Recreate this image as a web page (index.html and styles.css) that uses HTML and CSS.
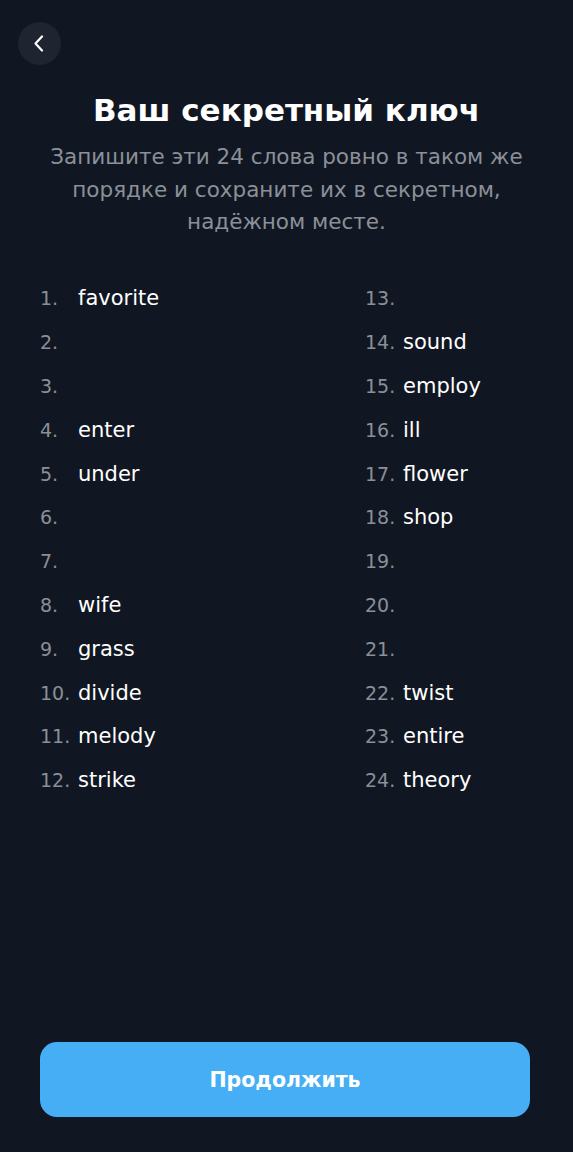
FILE: index.html
```html
<!DOCTYPE html>
<html lang="ru">
<head>
<meta charset="utf-8">
<link rel="stylesheet" href="styles.css">
</head>
<body>
<div class="screen">
  <header class="topbar">
    <button class="back" aria-label="Назад">
      <svg width="12" height="17" viewBox="0 0 12 17"><path d="M9 1.5 L2.5 8.5 L9 15.5" fill="none" stroke="#fff" stroke-width="2.2" stroke-linecap="round" stroke-linejoin="round"/></svg>
    </button>
  </header>
  <h1 class="title">Ваш секретный ключ</h1>
  <p class="subtitle">Запишите эти 24 слова ровно в таком же порядке и сохраните их в секретном, надёжном месте.</p>
  <div class="words">
    <ol class="col">
      <li><span class="n">1.</span><span class="w">favorite</span></li>
      <li><span class="n">2.</span><span class="w"></span></li>
      <li><span class="n">3.</span><span class="w"></span></li>
      <li><span class="n">4.</span><span class="w">enter</span></li>
      <li><span class="n">5.</span><span class="w">under</span></li>
      <li><span class="n">6.</span><span class="w"></span></li>
      <li><span class="n">7.</span><span class="w"></span></li>
      <li><span class="n">8.</span><span class="w">wife</span></li>
      <li><span class="n">9.</span><span class="w">grass</span></li>
      <li><span class="n">10.</span><span class="w">divide</span></li>
      <li><span class="n">11.</span><span class="w">melody</span></li>
      <li><span class="n">12.</span><span class="w">strike</span></li>
    </ol>
    <ol class="col">
      <li><span class="n">13.</span><span class="w"></span></li>
      <li><span class="n">14.</span><span class="w">sound</span></li>
      <li><span class="n">15.</span><span class="w">employ</span></li>
      <li><span class="n">16.</span><span class="w">ill</span></li>
      <li><span class="n">17.</span><span class="w">flower</span></li>
      <li><span class="n">18.</span><span class="w">shop</span></li>
      <li><span class="n">19.</span><span class="w"></span></li>
      <li><span class="n">20.</span><span class="w"></span></li>
      <li><span class="n">21.</span><span class="w"></span></li>
      <li><span class="n">22.</span><span class="w">twist</span></li>
      <li><span class="n">23.</span><span class="w">entire</span></li>
      <li><span class="n">24.</span><span class="w">theory</span></li>
    </ol>
  </div>
  <button class="primary">Продолжить</button>
</div>
</body>
</html>
```

FILE: styles.css
```css
* { box-sizing: border-box; }
html, body {
  margin: 0;
  padding: 0;
  background: #111722;
}
.screen {
  width: 573px;
  height: 1152px;
  display: flex;
  flex-direction: column;
  background: #111722;
  font-family: "DejaVu Sans", "Open Sans", sans-serif;
  color: #fff;
  padding: 0 40px 35px;
}
.topbar {
  height: 66px;
  padding-top: 22px;
  margin-left: -22px;
}
.back {
  width: 43px;
  height: 43px;
  border-radius: 50%;
  border: none;
  background: #1e2530;
  display: flex;
  align-items: center;
  justify-content: center;
  padding: 0 2px 0 0;
}
.title {
  margin: 22px 0 0;
  text-align: center;
  font-size: 31px;
  line-height: 44px;
  font-weight: 700;
  letter-spacing: 0;
}
.subtitle {
  margin: 9px -10px 0;
  text-align: center;
  font-size: 21.5px;
  line-height: 32.5px;
  color: #8b9099;
}
.words {
  display: grid;
  grid-template-columns: 325px 1fr;
  margin-top: 38px;
}
.col {
  list-style: none;
  margin: 0;
  padding: 0;
}
.col li {
  display: flex;
  height: 43.8px;
  align-items: center;
  font-size: 21px;
}
.n {
  width: 38px;
  color: #8a8f98;
  font-size: 19px;
}
.w {
  color: #fff;
}
.primary {
  margin-top: auto;
  width: 490px;
  height: 75px;
  border: none;
  border-radius: 17px;
  background: #46aef5;
  color: #fff;
  font-family: "DejaVu Sans", "Open Sans", sans-serif;
  font-size: 20.5px;
  font-weight: 700;
}
```
